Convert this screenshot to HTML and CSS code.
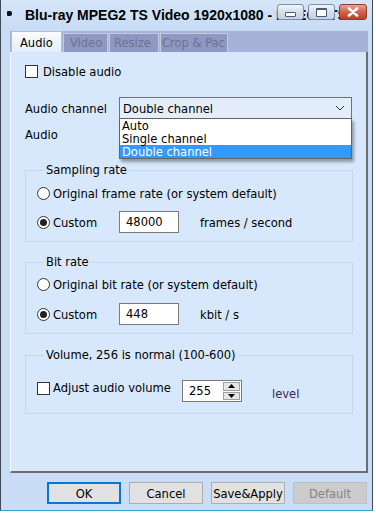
FILE: index.html
```html
<!DOCTYPE html>
<html lang="en">
<head>
<meta charset="UTF-8" />
<title>Blu-ray MPEG2 TS Video 1920x1080</title>
<link rel="stylesheet" href="styles.css">
</head>
<body>

<div class="window">
  <div class="titlebar">
    <span class="app-icon"></span>
    <span class="title">Blu-ray MPEG2 TS Video 1920x1080 - MPEG2 TS</span>
    <div class="caption">
      <span class="cap-btn cap-min"><i></i></span>
      <span class="cap-btn cap-max"><i></i></span>
      <span class="cap-btn cap-close">
        <svg width="14" height="10" viewBox="0 0 14 10"><path d="M3 1.5 L11 8.5 M11 1.5 L3 8.5" stroke="#fff" stroke-width="2.6" stroke-linecap="round"/></svg>
      </span>
    </div>
  </div>

  <div class="tabs">
    <div class="tab active">Audio</div>
    <div class="tab tab-video">Video</div>
    <div class="tab tab-resize">Resize</div>
    <div class="tab tab-crop">Crop &amp; Pac</div>
  </div>

  <div class="panel">
    <div class="row row-disable">
      <span class="check"></span>
      <span>Disable audio</span>
    </div>

    <div class="row row-channel">
      <span class="lbl">Audio channel</span>
      <div class="combo">
        <span>Double channel</span>
        <svg width="10" height="6" viewBox="0 0 10 6"><path d="M1 1 L5 5 L9 1" fill="none" stroke="#333" stroke-width="1"/></svg>
        <ul class="droplist">
          <li>Auto</li>
          <li>Single channel</li>
          <li class="sel">Double channel</li>
        </ul>
      </div>
    </div>

    <div class="row row-audio">
      <span>Audio</span>
    </div>

    <fieldset class="group group-sampling">
      <legend>Sampling rate</legend>
      <div class="row row-opt">
        <span class="radio"></span>
        <span>Original frame rate (or system default)</span>
      </div>
      <div class="row row-custom">
        <span class="radio on"></span>
        <span class="custom-lbl">Custom</span>
        <span class="field">48000</span>
        <span class="unit">frames / second</span>
      </div>
    </fieldset>

    <fieldset class="group group-bitrate">
      <legend>Bit rate</legend>
      <div class="row row-opt">
        <span class="radio"></span>
        <span>Original bit rate (or system default)</span>
      </div>
      <div class="row row-custom">
        <span class="radio on"></span>
        <span class="custom-lbl">Custom</span>
        <span class="field">448</span>
        <span class="unit">kbit / s</span>
      </div>
    </fieldset>

    <fieldset class="group group-volume">
      <legend>Volume, 256 is normal (100-600)</legend>
      <div class="row row-vol">
        <span class="check"></span>
        <span class="vol-lbl">Adjust audio volume</span>
        <div class="spin">
          <span class="spin-val">255</span>
          <div class="spin-btns">
            <span><svg width="7" height="4" viewBox="0 0 7 4"><path d="M0 4 L3.5 0 L7 4 Z" fill="#000"/></svg></span>
            <span><svg width="7" height="4" viewBox="0 0 7 4"><path d="M0 0 L3.5 4 L7 0 Z" fill="#000"/></svg></span>
          </div>
        </div>
        <span class="level">level</span>
      </div>
    </fieldset>
  </div>

  <div class="footer">
    <button class="btn btn-ok">OK</button>
    <button class="btn">Cancel</button>
    <button class="btn">Save&amp;Apply</button>
    <button class="btn btn-off">Default</button>
  </div>
</div>

</body>
</html>
```

FILE: styles.css
```css
body {
  margin: 0;
  background: #fff;
  font-family: 'DejaVu Sans Condensed', 'Liberation Sans', sans-serif;
  font-size: 12.8px;
  color: #000;
}

.window {
  width: 373px;
  height: 511px;
  box-sizing: border-box;
  background: #c9ddf6;
  border-left: 1px solid #3f4a58;
  border-right: 1px solid #3f4a58;
  border-bottom: 1px solid #2ea7c6;
  display: flex;
  flex-direction: column;
}

/* title bar */
.titlebar {
  position: relative;
  height: 31px;
  display: flex;
  align-items: center;
  padding-left: 6px;
  background: linear-gradient(#d6e6f9, #c6dbf5);
  overflow: hidden;
}

.app-icon {
  width: 5px;
  height: 5px;
  background: #111;
  border-radius: 1px 2px 2px 1px;
  margin-right: 13px;
  margin-top: -5px;
}

.title {
  font-family: 'Liberation Sans', sans-serif;
  font-weight: 700;
  font-size: 14px;
  white-space: nowrap;
  margin-top: -2px;
}

.caption {
  position: absolute;
  right: 5px;
  top: 4px;
  display: flex;
  gap: 4px;
}

.cap-btn {
  width: 27px;
  height: 16px;
  box-sizing: border-box;
  border: 1px solid #7d8ba3;
  border-radius: 3px;
  background: linear-gradient(#f1f5fb, #d2deee 50%, #c3d2e7);
  display: flex;
  align-items: center;
  justify-content: center;
}

.cap-min i {
  width: 9px;
  height: 3px;
  border: 1px solid #4d5a6e;
  border-radius: 1px;
  background: #fff;
  margin-top: 5px;
}

.cap-max i {
  width: 9px;
  height: 6px;
  border: 1px solid #4d5a6e;
  border-top-width: 2px;
  border-radius: 1px;
  background: #fff;
}

.cap-close {
  width: 28px;
  border-color: #8a3a2e;
  background: linear-gradient(#e8a695, #d0624c 50%, #bd3f28);
}

/* tabs */
.tabs {
  margin-left: 9px;
  width: 358px;
  height: 21px;
  background: #a8b2d9;
  display: flex;
  align-items: flex-end;
}

.tab {
  height: 19px;
  box-sizing: border-box;
  border: 1px solid #c4c9dd;
  border-bottom: none;
  background: #8e98c2;
  color: #6c7390;
  line-height: 18px;
  padding-left: 4px;
  margin-right: 1px;
  overflow: hidden;
  white-space: nowrap;
}

.tab.active {
  height: 21px;
  width: 51px;
  margin-left: 1px;
  background: linear-gradient(#fafcff, #e3eefc);
  border-color: #b3bfd6;
  color: #000;
  padding-left: 8px;
  line-height: 21px;
}

.tab-video { width: 45px; padding-left: 6px; }
.tab-resize { width: 50px; }
.tab-crop { width: 68px; padding-left: 1px; }

/* panel */
.panel {
  position: relative;
  margin-left: 9px;
  width: 358px;
  height: 421px;
  box-sizing: border-box;
  background: #d8e8fc;
  border-left: 1px solid #f2f7fe;
  border-right: 2px solid #6d6d6d;
  border-bottom: 2px solid #6d6d6d;
  padding: 9px 0 0 14px;
}

.row {
  display: flex;
  align-items: center;
  height: 20px;
}

.check {
  width: 11px;
  height: 11px;
  border: 1px solid #333;
  background: #fff;
  margin-right: 5px;
}

.row-channel {
  margin-top: 16px;
  height: 22px;
}

.lbl {
  width: 94px;
  white-space: nowrap;
}

.combo {
  position: relative;
  width: 233px;
  height: 22px;
  box-sizing: border-box;
  border: 1px solid #3c7fb1;
  background: #e3eefa;
  display: flex;
  align-items: center;
  justify-content: space-between;
  padding: 0 6px 0 3px;
}

.droplist {
  position: absolute;
  left: -1px;
  top: 20px;
  width: 233px;
  margin: 0;
  padding: 0;
  list-style: none;
  background: #fff;
  border: 1px solid #646464;
  box-sizing: border-box;
  box-shadow: 2px 3px 3px rgba(0, 0, 0, 0.35);
  z-index: 2;
}

.droplist li {
  height: 13px;
  line-height: 13px;
  padding-left: 2px;
}

.droplist li.sel {
  background: #3399ff;
  color: #fff;
}

.row-audio {
  margin-top: 5px;
}

/* group boxes */
.group {
  width: 328px;
  box-sizing: border-box;
  margin: 0;
  border: 1px solid #c9d6e6;
  padding: 0 0 8px 11px;
}

.group legend {
  padding: 0 2px;
  margin-left: 7px;
  line-height: 16px;
}

.group-sampling { margin-top: 18px; }
.group-bitrate { margin-top: 12px; }
.group-volume { margin-top: 13px; padding-bottom: 11px; }

.radio {
  width: 11px;
  height: 11px;
  border: 1px solid #333;
  border-radius: 50%;
  background: #fff;
  margin-right: 3px;
  display: flex;
  align-items: center;
  justify-content: center;
}

.radio.on::after {
  content: '';
  width: 7px;
  height: 7px;
  border-radius: 50%;
  background: #222;
}

.group-sampling .row-opt { margin-top: 5px; }
.group-bitrate .row-opt { margin-top: 4px; }

.row-custom {
  height: 22px;
  margin-top: 8px;
}

.group-bitrate .row-custom { margin-top: 9px; }

.custom-lbl {
  width: 66px;
}

.field {
  width: 60px;
  height: 22px;
  box-sizing: border-box;
  border: 1px solid #7a7a7a;
  background: #fff;
  padding-left: 6px;
  line-height: 20px;
  margin-right: 21px;
}

.row-vol {
  height: 22px;
  margin-top: 17px;
}

.row-vol .check {
  margin-right: 3px;
  align-self: flex-start;
  margin-top: 2px;
}

.vol-lbl {
  width: 129px;
  align-self: flex-start;
  white-space: nowrap;
}

.spin {
  width: 60px;
  height: 22px;
  box-sizing: border-box;
  border: 1px solid #7a7a7a;
  background: #fff;
  display: flex;
  justify-content: space-between;
}

.spin-val {
  padding-left: 6px;
  line-height: 20px;
}

.spin-btns {
  display: flex;
  flex-direction: column;
  gap: 1px;
  padding: 1px 1px 1px 0;
}

.spin-btns span {
  width: 15px;
  height: 8px;
  border: 1px solid #a0a0a0;
  background: #e5e5e5;
  display: flex;
  align-items: center;
  justify-content: center;
}

.level {
  margin-left: 30px;
  margin-top: 4px;
  color: #3d1f52;
}

/* bottom buttons */
.footer {
  display: flex;
  justify-content: flex-end;
  gap: 8px;
  padding: 9px 5px 0 0;
}

.btn {
  width: 74px;
  height: 22px;
  box-sizing: border-box;
  border: 1px solid #adadad;
  background: #e1e1e1;
  font-family: inherit;
  font-size: 12.8px;
  color: #000;
  padding: 0;
}

.btn-ok {
  border: 2px solid #0078d7;
}

.btn-off {
  background: #cccccc;
  border-color: #bfbfbf;
  color: #838383;
}
```
